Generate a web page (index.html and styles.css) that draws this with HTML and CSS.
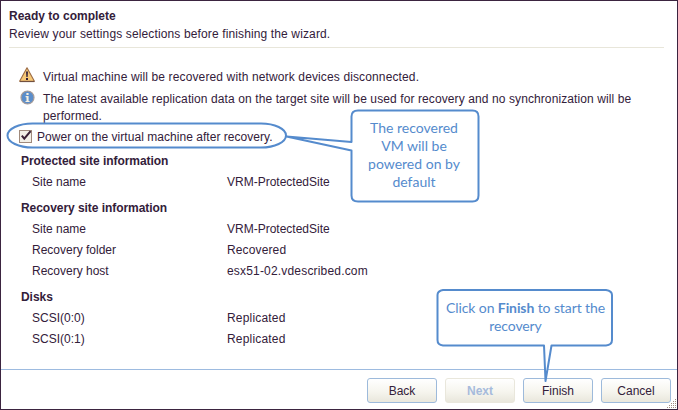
FILE: index.html
```
<!DOCTYPE html>
<html lang="en">
<head>
<meta charset="utf-8">
<title>Ready to complete</title>
<link rel="stylesheet" href="styles.css">
</head>
<body>
<main class="wizard">
  <header class="head">
    <h1>Ready to complete</h1>
    <p class="wide">Review your settings selections before finishing the wizard.</p>
  </header>
  <section class="content">
    <div class="notice">
      <svg class="icon" width="16" height="16" viewBox="0 0 16 16"><path d="M8 .8 15.400 14.200H.6Z" fill="#f6c877" stroke="#9b6a43" stroke-width="1.1" stroke-linejoin="round"/><path d="M1 14.600H15.400" stroke="#6b4a3c" stroke-width="1"/><path d="M7 4.600H9L8.600 10H7.400Z" fill="#33203a"/><rect x="7" y="11" width="2" height="2" fill="#33203a"/></svg>
      <p class="wide">Virtual machine will be recovered with network devices disconnected.</p>
    </div>
    <div class="notice info">
      <svg class="icon" width="16" height="16" viewBox="0 0 16 16"><circle cx="8.500" cy="7.500" r="6.500" fill="#5b8ecb" stroke="#a79c98" stroke-width="1.200"/><path d="M7.400 3h2.200v1.900H7.400ZM6.600 6.100h3v4.800h1v1.200H6.500v-1.200h1V7.300h-.9Z" fill="#f6efdf"/></svg>
      <div class="lines">
        <p>The latest available replication data on the target site will be used for recovery and no synchronization will be</p>
        <p>performed.</p>
      </div>
    </div>
    <label class="option">
      <svg class="check" width="13" height="13" viewBox="0 0 13 13"><rect x=".5" y=".5" width="12" height="12" fill="#f3efe6" stroke="#a08a7c"/><path d="M2.800 5.600 5.300 8.600 11.600 1.200" fill="none" stroke="#3b2034" stroke-width="2"/></svg>
      <span>Power on the virtual machine after recovery.</span>
    </label>
    <h2>Protected site information</h2>
    <dl><dt>Site name</dt><dd>VRM-ProtectedSite</dd></dl>
    <h2>Recovery site information</h2>
    <dl><dt>Site name</dt><dd>VRM-ProtectedSite</dd><dt>Recovery folder</dt><dd class="wide">Recovered</dd><dt>Recovery host</dt><dd class="host">esx51-02.vdescribed.com</dd></dl>
    <h2>Disks</h2>
    <dl><dt>SCSI(0:0)</dt><dd class="host">Replicated</dd><dt>SCSI(0:1)</dt><dd class="host">Replicated</dd></dl>
  </section>
  <footer class="actions">
    <button>Back</button><button class="off" disabled>Next</button><button>Finish</button><button>Cancel</button>
  </footer>
  <svg class="grip" width="10" height="10" viewBox="0 0 10 10"><path d="M8 0h1v1H8zM6 2h1v1H6zM8 2h1v1H8zM4 4h1v1H4zM6 4h1v1H6zM8 4h1v1H8zM2 6h1v1H2zM4 6h1v1H4zM6 6h1v1H6zM8 6h1v1H8zM0 8h1v1H0zM2 8h1v1H2zM4 8h1v1H4zM6 8h1v1H6zM8 8h1v1H8z" fill="#a08a80"/></svg>
  <svg class="marks" width="678" height="410" viewBox="0 0 678 410">
    <rect x="7.500" y="123.500" width="278.500" height="24" rx="25" ry="12"/>
    <path class="box" d="M358 110.500H472.500Q478.500 110.500 478.500 116.500V195.500Q478.500 201.500 472.500 201.500H358Q351.500 201.500 351.500 195.500V150.500L286.500 136.500L351.500 142V116.500Q351.500 110.500 358 110.500Z"/>
    <path class="box" d="M443 290H606Q612 291 612 295V340Q612 345 606 345.500H551.500L545.500 381L544 345.500H443Q437.500 345 437.500 340V295Q437.500 291 443 290Z"/>
  </svg>
  <aside class="tip tip-power">The recovered<br>VM will be<br>powered on by<br>default</aside>
  <aside class="tip tip-finish">Click on <b>Finish</b> to start the<br><span class="second">recovery</span></aside>
</main>
</body>
</html>
```
FILE: styles.css
```
* { box-sizing: border-box; }
body { margin: 0; }
.wizard {
  position: relative;
  display: flex;
  flex-direction: column;
  width: 678px;
  height: 410px;
  overflow: hidden;
  border: 1px solid #3b2440;
  background: #fff;
  color: #33203a;
  font: 12px/18px "Liberation Sans", Arial, sans-serif;
}
h1, h2, p, dl, dd { margin: 0; font-size: 12px; }
.head { height: 47px; margin: 0 13px 0 8px; padding-top: 6px; border-bottom: 1px solid #e8e6da; }
.wide { letter-spacing: 0.13px; }
.host { letter-spacing: 0.18px; }
.content { flex: 1; padding: 19px 20px 0; }
.notice { display: flex; gap: 8px; height: 21px; }
.notice .icon { flex: none; margin: 0 0 0 -2px; }
.notice p { line-height: 17px; white-space: nowrap; }
.notice > p { padding-top: 2px; }
.notice.info { height: 38px; }
.notice.info .icon { margin-top: 2px; }
.lines { padding-top: 3px; letter-spacing: 0.1px; }
.option { display: flex; align-items: center; gap: 5px; height: 21px; margin: 0 0 -1px -2px; letter-spacing: 0.04px; }
h2 { height: 20px; margin-top: 6px; line-height: 19px; letter-spacing: -0.05px; }
dl { display: grid; grid-template-columns: 195px 1fr; padding-left: 11px; line-height: 21px; }
.actions { display: flex; justify-content: flex-end; gap: 8px; height: 40px; padding: 8px 6px 0; border-top: 1px solid #9dbbe0; }
button {
  width: 70px;
  height: 25px;
  padding: 0;
  border: 1px solid #9dbadb;
  border-radius: 3px;
  background: linear-gradient(#fff, #f6f5ee 55%, #e9e7dc);
  color: #33203a;
  font: 12px "Liberation Sans", Arial, sans-serif;
}
button.off { border-color: #e9e7dc; color: #a6bbdc; font-weight: bold; }
.grip { position: absolute; right: 0; bottom: 0; }
.marks { position: absolute; left: -1px; top: -1px; fill: none; stroke: #558bcd; stroke-width: 2; stroke-linejoin: round; pointer-events: none; }
.marks .box { fill: #fff; }
.tip { position: absolute; color: #558bcd; font: 14px/18px Lato, sans-serif; text-align: center; white-space: nowrap; }
.tip-power { left: 350px; top: 118px; width: 126px; }
.tip-finish { left: 438px; top: 298px; width: 173px; letter-spacing: -0.1px; }
.second { margin-right: 20px; }
```
